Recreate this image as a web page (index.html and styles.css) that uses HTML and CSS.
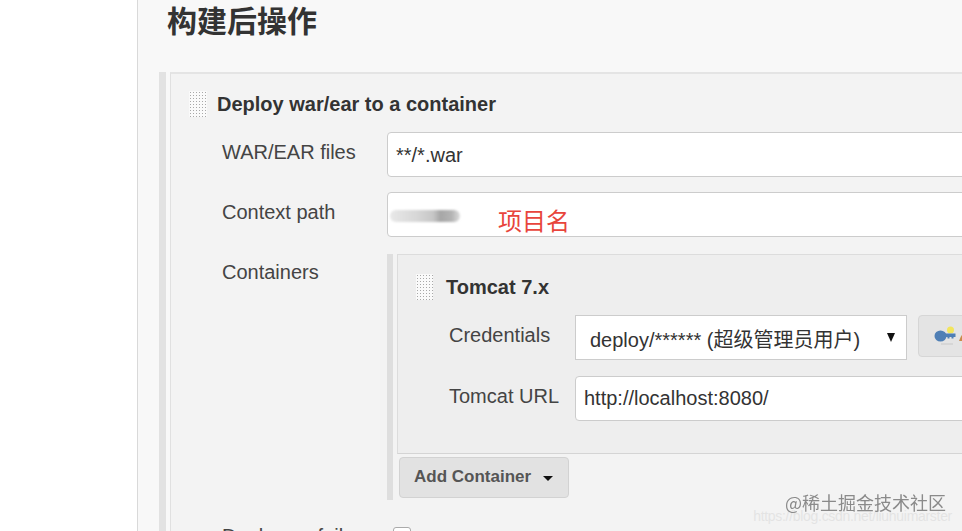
FILE: index.html
```html
<!DOCTYPE html>
<html lang="zh-CN">
<head>
    <meta charset="UTF-8">
    <meta name="viewport" content="width=device-width, initial-scale=1.0">
    <title>构建后操作</title>
    <link rel="stylesheet" href="styles.css">
</head>
<body>
    <div class="page">
        <aside class="side"></aside>
        <main class="content">
            <h1 class="section-title">构建后操作</h1>
            <div class="step-wrap">
                <section class="step">
                    <div class="step-head">
                        <span class="grip"></span>
                        <span class="step-name">Deploy war/ear to a container</span>
                    </div>
                    <div class="row row-files">
                        <label class="row-label">WAR/EAR files</label>
                        <div class="field">**/*.war</div>
                    </div>
                    <div class="row row-context">
                        <label class="row-label">Context path</label>
                        <div class="field field-context">
                            <span class="smudge"></span>
                            <span class="note">项目名</span>
                        </div>
                    </div>
                    <div class="row row-containers">
                        <label class="row-label">Containers</label>
                        <div class="containers">
                            <div class="container-box">
                                <div class="step-head inner-head">
                                    <span class="grip grip-small"></span>
                                    <span class="inner-name">Tomcat 7.x</span>
                                </div>
                                <div class="inner-row">
                                    <label class="inner-label">Credentials</label>
                                    <div class="select">
                                        <span>deploy/****** (超级管理员用户)</span>
                                        <span class="select-arrow"></span>
                                    </div>
                                    <button class="add-key">
                                        <svg width="30" height="24" viewBox="0 0 30 24">
                                            <circle cx="16.500" cy="6" r="3.500" fill="#f2e55c"/>
                                            <ellipse cx="6.500" cy="12" rx="6" ry="5.500" fill="#4f7fb5"/>
                                            <path d="M11 9.500h10.500v3.500h-2v1.500h-2v-1.500h-2v1.500h-2v-1.500h-2.500z" fill="#4f7fb5"/>
                                            <path d="M7 20h12" stroke="#c8c8c8" stroke-width="1"/>
                                            <path d="M25 17l2.500-6 2.500 6z" fill="#c98a4a"/>
                                        </svg>
                                    </button>
                                </div>
                                <div class="inner-row inner-row-url">
                                    <label class="inner-label">Tomcat URL</label>
                                    <div class="field field-url">http://localhost:8080/</div>
                                </div>
                            </div>
                            <button class="add-container">Add Container<span class="caret"></span></button>
                        </div>
                    </div>
                    <div class="row row-failure">
                        <label class="row-label">Deploy on failure</label>
                        <span class="checkbox"></span>
                    </div>
                </section>
            </div>
        </main>
    </div>
    <div class="watermark">
        <div class="mark-juejin">@稀土掘金技术社区</div>
        <div class="mark-csdn">https://blog.csdn.net/liuhuimarster</div>
    </div>
</body>
</html>
```

FILE: styles.css
```css
html, body {
    margin: 0;
    height: 531px;
    overflow: hidden;
    background-color: #fff;
}
body {
    font-family: "Liberation Sans", Arial, "Noto Sans CJK SC", sans-serif;
    color: #333;
    position: relative;
}
.page {
    display: flex;
    width: 1300px;
    height: 531px;
}
.side {
    width: 137px;
    flex-shrink: 0;
}
.content {
    flex: 1;
    background-color: #f8f8f8;
    border-left: 1px solid #d9d9d9;
    padding-left: 21px;
}
.section-title {
    margin: 0;
    padding-left: 8px;
    height: 72px;
    font-family: "Noto Sans CJK SC", sans-serif;
    font-size: 30px;
    line-height: 38px;
    font-weight: 700;
    color: #333;
}
.step-wrap {
    border-left: 7px solid #e2e2e2;
    padding-left: 4px;
}
.step {
    border-top: 2px solid #e4e4e4;
    border-left: 1px solid #e0e0e0;
    background-color: #f3f3f3;
    height: 460px;
}
.step-head {
    display: flex;
    align-items: center;
    gap: 10px;
    padding: 16px 0 0 18px;
    height: 28px;
}
.grip {
    width: 18px;
    height: 26px;
    flex-shrink: 0;
    background-color: #fafafa;
    background-image: radial-gradient(circle, #a8a8a8 0.8px, transparent 1px);
    background-size: 3px 3px;
}
.step-name {
    font-size: 20px;
    font-weight: 700;
    color: #333;
}
.row {
    display: flex;
    margin-left: 51px;
    font-size: 20px;
}
.row-files {
    margin-top: 14px;
}
.row-context {
    margin-top: 15px;
}
.row-containers {
    margin-top: 17px;
}
.row-failure {
    margin-top: 25px;
}
.row-label {
    width: 165px;
    flex-shrink: 0;
    padding-top: 9px;
    color: #444;
    line-height: 22px;
}
.row-containers .row-label {
    padding-top: 7px;
}
.field {
    flex: 1;
    height: 45px;
    box-sizing: border-box;
    background-color: #fff;
    border: 1px solid #ccc;
    border-radius: 4px;
    padding: 11px 8px 0;
    font-size: 20px;
    line-height: 22px;
    color: #333;
}
.field-context {
    position: relative;
}
.smudge {
    position: absolute;
    left: 2px;
    top: 17px;
    width: 70px;
    height: 12px;
    border-radius: 6px;
    background: linear-gradient(90deg, #e8e8e8, #d6d6d6 40%, #c6c6c6 62%, #a6a6a6 72%, #b4b4b4 88%, #dcdcdc);
    filter: blur(0.8px);
}
.note {
    position: absolute;
    left: 110px;
    top: 12px;
    font-family: "Noto Sans CJK SC", sans-serif;
    font-size: 24px;
    line-height: 30px;
    color: #e8453c;
}
.containers {
    flex: 1;
    border-left: 6px solid #dedede;
    padding-left: 4px;
    height: 246px;
}
.container-box {
    height: 200px;
    box-sizing: border-box;
    background-color: #eee;
    border-top: 1px solid #dcdcdc;
    border-left: 1px solid #dcdcdc;
    border-bottom: 1px solid #d4d4d4;
}
.inner-head {
    padding: 19px 0 0 18px;
    height: 26px;
    gap: 13px;
}
.grip-small {
    width: 17px;
    height: 26px;
}
.inner-name {
    font-size: 20px;
    font-weight: 700;
    color: #333;
}
.inner-row {
    display: flex;
    margin: 15px 0 0 51px;
    font-size: 20px;
}
.inner-row-url {
    margin-top: 16px;
}
.inner-label {
    width: 126px;
    flex-shrink: 0;
    padding-top: 9px;
    line-height: 22px;
    color: #444;
}
.select {
    width: 332px;
    height: 45px;
    box-sizing: border-box;
    display: flex;
    justify-content: space-between;
    background-color: #fff;
    border: 1px solid #ccc;
    padding: 12px 11px 0 14px;
    font-size: 20px;
    line-height: 24px;
    color: #333;
}
.select-arrow {
    width: 0;
    height: 0;
    margin-top: 5px;
    border-left: 4px solid transparent;
    border-right: 4px solid transparent;
    border-top: 9px solid #111;
}
.add-key {
    display: flex;
    align-items: center;
    margin-left: 11px;
    width: 120px;
    height: 42px;
    padding: 0 0 0 15px;
    background-color: #e4e4e4;
    border: 1px solid #d6d6d6;
    border-radius: 4px;
}
.add-key svg {
    flex-shrink: 0;
}
.field-url {
    flex: 1;
    padding: 10px 8px 0;
}
.add-container {
    display: flex;
    align-items: center;
    margin: 3px 0 0 2px;
    width: 170px;
    height: 41px;
    padding: 0 0 2px 14px;
    background-color: #e2e2e2;
    border: 1px solid #d2d2d2;
    border-radius: 4px;
    font-family: inherit;
    font-size: 17px;
    font-weight: 700;
    color: #555;
}
.caret {
    width: 0;
    height: 0;
    margin: 4px 0 0 12px;
    border-left: 5px solid transparent;
    border-right: 5px solid transparent;
    border-top: 5px solid #111;
}
.row-failure .row-label {
    padding-top: 0;
    width: 171px;
}
.checkbox {
    width: 16px;
    height: 16px;
    margin-top: 2px;
    background-color: #fff;
    border: 1px solid #aaa;
    border-radius: 3px;
}
.watermark {
    position: absolute;
    right: 10px;
    top: 491px;
    text-align: right;
    pointer-events: none;
}
.mark-juejin {
    padding-right: 6px;
    font-family: "Noto Sans CJK SC", sans-serif;
    font-size: 18px;
    line-height: 22px;
    color: #8a8a8a;
    filter: blur(0.3px);
}
.mark-csdn {
    margin-top: -5px;
    font-size: 14px;
    line-height: 16px;
    letter-spacing: -0.3px;
    color: rgba(225, 225, 225, 0.85);
}
```
